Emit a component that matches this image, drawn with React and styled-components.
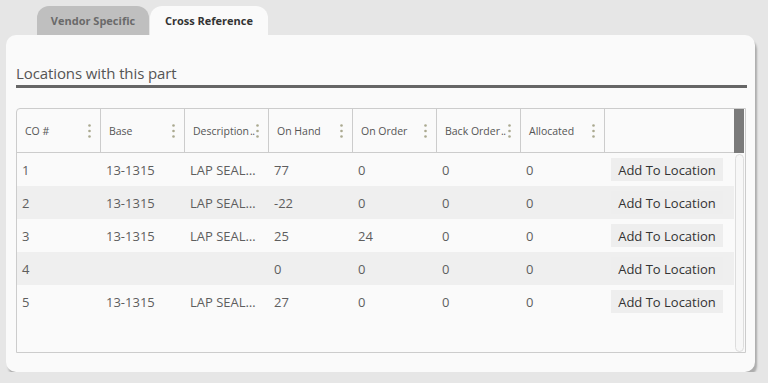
import React from 'react'
import styled, { createGlobalStyle } from 'styled-components'

const GlobalStyle = createGlobalStyle`
    html, body {
        margin: 0;
        padding: 0;
        background: #e6e6e6;
        font-family: "Open Sans", "Liberation Sans", sans-serif;
    }
`

const columns = [
    { label: 'CO #' },
    { label: 'Base' },
    { label: 'Description', clipped: true },
    { label: 'On Hand' },
    { label: 'On Order' },
    { label: 'Back Order', clipped: true },
    { label: 'Allocated' },
]

const rows = [
    { co: '1', base: '13-1315', desc: 'LAP SEALANT', hand: '77', order: '0', back: '0', alloc: '0' },
    { co: '2', base: '13-1315', desc: 'LAP SEALANT', hand: '-22', order: '0', back: '0', alloc: '0' },
    { co: '3', base: '13-1315', desc: 'LAP SEALANT', hand: '25', order: '24', back: '0', alloc: '0' },
    { co: '4', base: '', desc: '', hand: '0', order: '0', back: '0', alloc: '0' },
    { co: '5', base: '13-1315', desc: 'LAP SEALANT', hand: '27', order: '0', back: '0', alloc: '0' },
]

function Kebab() {
    return (
        <svg width="3" height="14" viewBox="0 0 3 14">
            <circle cx="1.5" cy="1.5" r="1.3" fill="#aaa98f" />
            <circle cx="1.5" cy="7" r="1.3" fill="#aaa98f" />
            <circle cx="1.5" cy="12.5" r="1.3" fill="#aaa98f" />
        </svg>
    )
}

export default function App() {
    return (
        <Page>
            <GlobalStyle />
            <Tabs>
                <Tab>Vendor Specific</Tab>
                <Tab active>Cross Reference</Tab>
            </Tabs>
            <Panel>
                <Title>Locations with this part</Title>
                <Table>
                    <Main>
                        <HeaderRow>
                            {columns.map((c) => (
                                <HeadCell key={c.label}>
                                    <HeadLabel clipped={c.clipped}>{c.label}</HeadLabel>
                                    <Kebab />
                                </HeadCell>
                            ))}
                            <HeadCell last />
                        </HeaderRow>
                        {rows.map((r, i) => (
                            <Row key={r.co} striped={i % 2 === 1}>
                                <Cell>{r.co}</Cell>
                                <Cell>{r.base}</Cell>
                                <Cell>{r.desc}</Cell>
                                <Cell>{r.hand}</Cell>
                                <Cell>{r.order}</Cell>
                                <Cell>{r.back}</Cell>
                                <Cell>{r.alloc}</Cell>
                                <Cell>
                                    <AddButton>Add To Location</AddButton>
                                </Cell>
                            </Row>
                        ))}
                    </Main>
                    <Scroll>
                        <ScrollHead />
                        <ScrollTrack />
                    </Scroll>
                </Table>
            </Panel>
        </Page>
    )
}

const Page = styled.div`
    padding: 6px 0 0 6px;
    width: 749px;
`
const Tabs = styled.div`
    display: flex;
    padding-left: 31px;
    gap: 1px;
`
const Tab = styled.div`
    width: ${(p) => (p.active ? '118px' : '112px')};
    height: 29px;
    display: flex;
    align-items: center;
    justify-content: center;
    font-size: 11px;
    font-weight: 700;
    color: ${(p) => (p.active ? '#333' : '#6a6a6a')};
    background: ${(p) => (p.active ? '#fafafa' : '#bfbfbf')};
    border-radius: 12px 12px 0 0;
`
const Panel = styled.div`
    background: #fafafa;
    border-radius: 10px;
    height: 337px;
    box-sizing: border-box;
    padding: 28px 8px 0 10px;
    box-shadow: 2px 4px 2px rgba(0, 0, 0, 0.25);
`
const Title = styled.div`
    font-size: 15px;
    line-height: 20px;
    letter-spacing: -0.1px;
    color: #555;
    padding-bottom: 2px;
    border-bottom: 3px solid #666;
    margin-bottom: 20px;
`
const Table = styled.div`
    display: flex;
    width: 730px;
    height: 245px;
    box-sizing: border-box;
    border: 1px solid #ccc;
    border-radius: 4px 0 0 0;
    overflow: hidden;
`
const Main = styled.div`
    flex: 1;
    display: flex;
    flex-direction: column;
`
const HeaderRow = styled.div`
    display: grid;
    grid-template-columns: repeat(7, 84px) 1fr;
    height: 44px;
    box-sizing: border-box;
    border-bottom: 1px solid #ccc;
`
const HeadCell = styled.div`
    display: flex;
    align-items: center;
    justify-content: space-between;
    padding: 0 9px 0 8px;
    border-right: ${(p) => (p.last ? 'none' : '1px solid #ccc')};
    font-size: 10.5px;
    color: #555;
`
const HeadLabel = styled.span`
    white-space: nowrap;
    margin-right: -3px;

    &::after {
        content: ${(p) => (p.clipped ? "'..'" : "''")};
        margin-left: 1px;
        letter-spacing: -0.5px;
    }
`
const Row = styled.div`
    display: grid;
    grid-template-columns: repeat(7, 84px) 1fr;
    height: 33px;
    align-items: center;
    background: ${(p) => (p.striped ? '#efefef' : '#fafafa')};
`
const Cell = styled.div`
    padding: 0 9px 0 5px;
    font-size: 13px;
    color: #5e5e5e;
    overflow: hidden;
    white-space: nowrap;
    text-overflow: ellipsis;
`
const AddButton = styled.button`
    height: 23px;
    width: 112px;
    margin-left: 1px;
    border: none;
    padding: 0;
    background: #eeeeee;
    font-family: "Open Sans", "Liberation Sans", sans-serif;
    font-size: 13px;
    color: #333;
`
const Scroll = styled.div`
    width: 10px;
    display: flex;
    flex-direction: column;
    margin-right: 1px;
`
const ScrollHead = styled.div`
    height: 44px;
    background: #7a7a7a;
    flex-shrink: 0;
`
const ScrollTrack = styled.div`
    flex: 1;
    margin: 1px 0 0 1px;
    border: 1px solid #ddd;
    border-radius: 5px;
    background: #f7f7f7;
`
